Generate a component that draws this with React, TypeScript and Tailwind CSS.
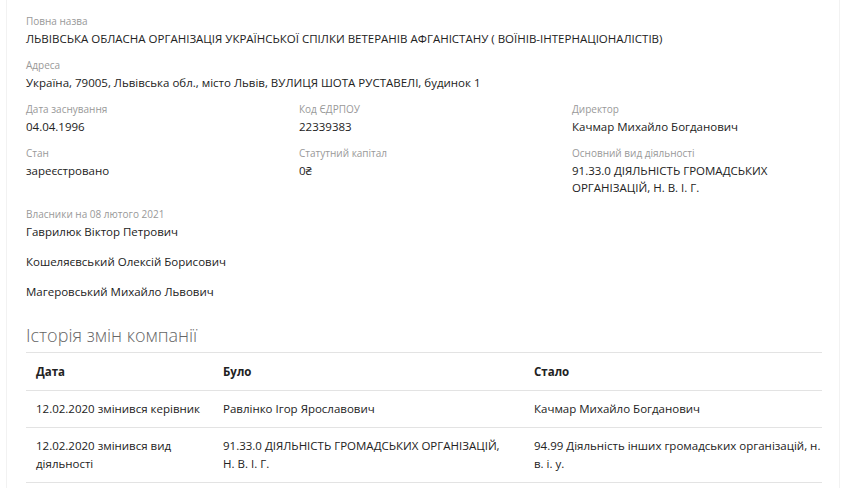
const font = { fontFamily: '"Open Sans", "Noto Sans", sans-serif' };

function Field({ label, children }: { label: string; children: React.ReactNode }) {
  return (
    <div>
      <div className="text-[10px] leading-[14px] text-[#999]">{label}</div>
      <div className="text-[11.5px] leading-[17px] text-[#222] mt-[2px]">{children}</div>
    </div>
  );
}

export default function App() {
  const owners = [
    'Гаврилюк Віктор Петрович',
    'Кошеляєвський Олексій Борисович',
    'Магеровський Михайло Львович',
  ];

  const history = [
    {
      date: '12.02.2020 змінився керівник',
      was: 'Равлінко Ігор Ярославович',
      now: 'Качмар Михайло Богданович',
    },
    {
      date: '12.02.2020 змінився вид діяльності',
      was: '91.33.0 ДІЯЛЬНІСТЬ ГРОМАДСЬКИХ ОРГАНІЗАЦІЙ, Н. В. І. Г.',
      now: '94.99 Діяльність інших громадських організацій, н. в. і. у.',
    },
  ];

  return (
    <div className="bg-white h-[488px] overflow-hidden" style={font}>
      <div className="mx-[6px] w-[834px] h-full border-x border-[#f2f2f2] pl-[19px] pr-[17px] pt-[14px]">
        <Field label="Повна назва">
          ЛЬВІВСЬКА ОБЛАСНА ОРГАНІЗАЦІЯ УКРАЇНСЬКОЇ СПІЛКИ ВЕТЕРАНІВ АФГАНІСТАНУ ( ВОЇНІВ-ІНТЕРНАЦІОНАЛІСТІВ)
        </Field>
        <div className="mt-[11px]">
          <Field label="Адреса">Україна, 79005, Львівська обл., місто Львів, ВУЛИЦЯ ШОТА РУСТАВЕЛІ, будинок 1</Field>
        </div>

        <div className="grid grid-cols-[273px_273px_1fr] gap-y-[11px] mt-[11px]">
          <Field label="Дата заснування">04.04.1996</Field>
          <Field label="Код ЄДРПОУ">22339383</Field>
          <Field label="Директор">Качмар Михайло Богданович</Field>
          <Field label="Стан">зареєстровано</Field>
          <Field label="Статутний капітал">0₴</Field>
          <Field label="Основний вид діяльності">
            91.33.0 ДІЯЛЬНІСТЬ ГРОМАДСЬКИХ
            <br />
            ОРГАНІЗАЦІЙ, Н. В. І. Г.
          </Field>
        </div>

        <div className="mt-[11px]">
          <div className="text-[10px] leading-[14px] text-[#999]">Власники на 08 лютого 2021</div>
          <div className="flex flex-col gap-[13px] mt-[2px]">
            {owners.map((o) => (
              <div key={o} className="text-[11.5px] leading-[17px] text-[#222]">
                {o}
              </div>
            ))}
          </div>
        </div>

        <h2 className="mt-[23px] text-[18px] leading-[24px] font-light text-[#666]">Історія змін компанії</h2>

        <table className="w-full table-fixed mt-[5px] border-t border-[#e3e3e3] text-[11.5px] text-[#222] border-collapse">
          <thead>
            <tr className="border-b border-[#e3e3e3]">
              <th className="w-[187px] text-left font-bold px-[10px] py-[10px] leading-[17px]">Дата</th>
              <th className="w-[311px] text-left font-bold px-[10px] py-[10px] leading-[17px]">Було</th>
              <th className="text-left font-bold pl-[10px] pr-0 py-[10px] leading-[17px]">Стало</th>
            </tr>
          </thead>
          <tbody>
            {history.map((h) => (
              <tr key={h.date} className="border-b border-[#e3e3e3] align-top">
                <td className="px-[10px] py-[9px] leading-[18px]">{h.date}</td>
                <td className="px-[10px] py-[9px] leading-[18px]">{h.was}</td>
                <td className="pl-[10px] pr-0 py-[9px] leading-[18px]">{h.now}</td>
              </tr>
            ))}
          </tbody>
        </table>
      </div>
    </div>
  );
}
